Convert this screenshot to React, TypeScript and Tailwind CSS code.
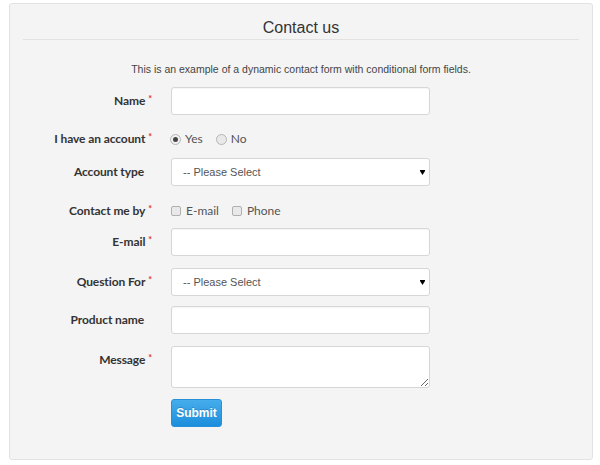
import React from 'react';

const labelFont = { fontFamily: 'Lato, "Open Sans", "Liberation Sans", sans-serif' };

function Label({ text, required = false, top = false }: { text: string; required?: boolean; top?: boolean }) {
  return (
    <div className={`w-[142px] shrink-0 text-right text-[12px] font-bold tracking-[-0.1px] text-[#333] ${top ? 'self-start pt-[5px]' : ''}`} style={labelFont}>
      {text}
      {required ? <span className="ml-[3px] align-top text-[9px] text-[#e0301e]">*</span> : <span className="ml-[3px] inline-block w-[5px]" />}
    </div>
  );
}

function TextBox() {
  return <div className="h-[28px] w-[259px] rounded-[3px] border border-[#d6d6d6] bg-white shadow-[inset_0_1px_1px_rgba(0,0,0,0.04)]" />;
}

function SelectBox() {
  return (
    <div className="flex h-[28px] w-[259px] items-center justify-between rounded-[3px] border border-[#d6d6d6] bg-white pl-[11px] pr-[4px] text-[11px] text-[#555]" style={{ fontFamily: '"Liberation Sans", Arial, sans-serif' }}>
      <span>-- Please Select</span>
      <svg width="5" height="5" viewBox="0 0 5 5" className="mt-[1px]">
        <rect x="0" y="0" width="5" height="1" fill="#000" />
        <path d="M0 1h5L2.5 5z" fill="#000" />
      </svg>
    </div>
  );
}

function Row({ children, className = '' }: { children: React.ReactNode; className?: string }) {
  return <div className={`flex items-center gap-[19px] ${className}`}>{children}</div>;
}

export default function App() {
  const optFont = { fontFamily: 'Lato, "Open Sans", "Liberation Sans", sans-serif' };
  return (
    <div className="h-[465px] w-[600px] bg-white pl-[9px] pt-[3px]">
      <div className="h-[457px] w-[584px] rounded-[3px] border border-[#e2e2e2] bg-[#f4f4f4] px-[13px]">
        <h2 className="pt-[14px] text-center text-[16px] leading-[20px] text-[#333]" style={{ fontFamily: '"Liberation Sans", Arial, sans-serif' }}>
          Contact us
        </h2>
        <div className="mt-[1px] h-px bg-[#e2e2e2]" />
        <p className="mt-[22px] text-center text-[10.5px] leading-[14px] text-[#444]" style={{ fontFamily: '"Liberation Sans", Arial, sans-serif' }}>
          This is an example of a dynamic contact form with conditional form fields.
        </p>

        <div className="-ml-[13px] mt-[11px]">
          <Row>
            <Label text="Name" required />
            <TextBox />
          </Row>
          <Row className="mt-[14px] h-[20px]">
            <Label text="I have an account" required />
            <div className="flex items-center text-[12px] text-[#555]" style={optFont}>
              <span className="ml-[-1px] flex h-[11px] w-[11px] items-center justify-center rounded-full border border-[#b5b5b5] bg-[#f0f0f0]">
                <span className="h-[5px] w-[5px] rounded-full bg-[#444]" />
              </span>
              <span className="ml-[4px]">Yes</span>
              <span className="ml-[13px] h-[11px] w-[11px] rounded-full border border-[#b5b5b5] bg-[#e9e9e9]" />
              <span className="ml-[4px]">No</span>
            </div>
          </Row>
          <Row className="mt-[9px]">
            <Label text="Account type" />
            <SelectBox />
          </Row>
          <Row className="mt-[15px] h-[20px]">
            <Label text="Contact me by" required />
            <div className="flex items-center text-[12px] text-[#555]" style={optFont}>
              <span className="h-[10px] w-[10px] rounded-[2px] border border-[#b0b0b0] bg-[#e9e9e9]" />
              <span className="ml-[5px]">E-mail</span>
              <span className="ml-[13px] h-[10px] w-[10px] rounded-[2px] border border-[#b0b0b0] bg-[#e9e9e9]" />
              <span className="ml-[5px]">Phone</span>
            </div>
          </Row>
          <Row className="mt-[7px]">
            <Label text="E-mail" required />
            <TextBox />
          </Row>
          <Row className="mt-[12px]">
            <Label text="Question For" required />
            <SelectBox />
          </Row>
          <Row className="mt-[10px]">
            <Label text="Product name" />
            <TextBox />
          </Row>
          <Row className="mt-[12px]">
            <Label text="Message" required top />
            <textarea readOnly className="block h-[42px] w-[259px] rounded-[3px] border border-[#d6d6d6] bg-white outline-none" />
          </Row>
          <Row className="mt-[11px]">
            <div className="w-[142px] shrink-0" />
            <button
              className="h-[28px] w-[51px] rounded-[3px] border border-[#2790d8] bg-gradient-to-b from-[#45adec] to-[#1b8edc] text-[12px] font-bold text-white [text-shadow:0_-1px_0_rgba(0,0,0,0.2)]"
              style={{ fontFamily: '"Liberation Sans", Arial, sans-serif' }}
            >
              Submit
            </button>
          </Row>
        </div>
      </div>
    </div>
  );
}
